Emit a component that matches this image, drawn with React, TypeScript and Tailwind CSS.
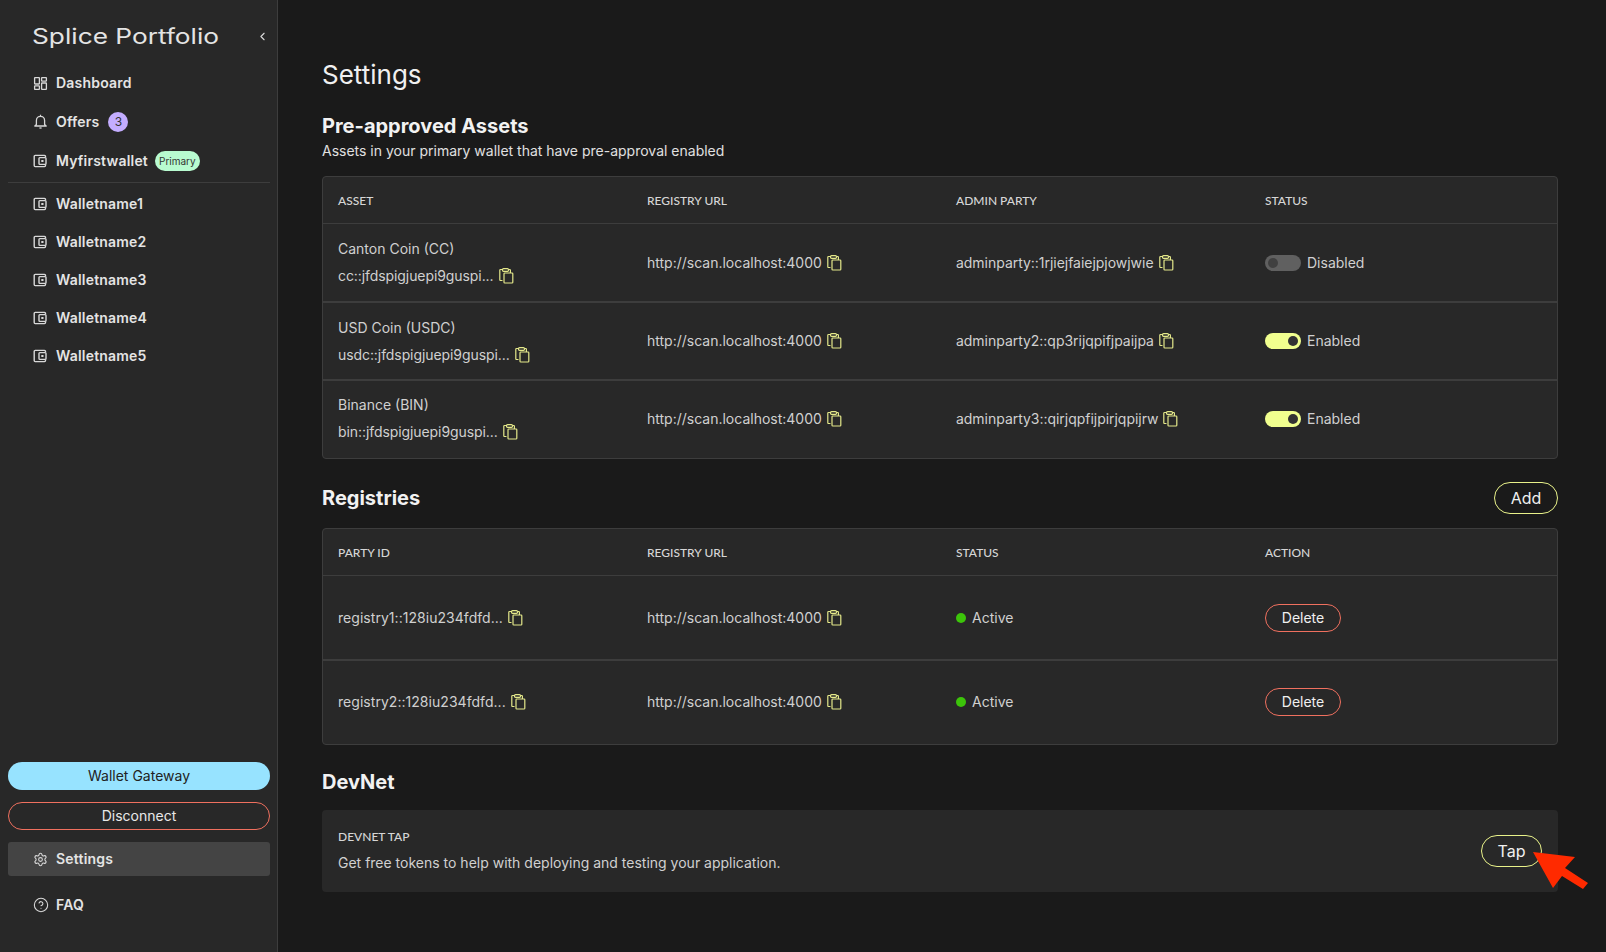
import React from "react";
import { ChevronLeft, CircleHelp, Settings } from "lucide-react";

const sans = "font-['Inter',sans-serif]";

const DashboardIcon = () => (
  <svg width="15" height="15" viewBox="0 0 15 15" fill="none" stroke="currentColor" strokeWidth="1.3">
    <rect x="1.6" y="1.6" width="4.8" height="6.4" rx="0.5" />
    <rect x="8.6" y="1.6" width="4.8" height="3.6" rx="0.5" />
    <rect x="8.6" y="7" width="4.8" height="6.4" rx="0.5" />
    <rect x="1.6" y="9.8" width="4.8" height="3.6" rx="0.5" />
  </svg>
);

const BellIcon = () => (
  <svg width="15" height="15" viewBox="0 0 15 15" fill="none" stroke="currentColor" strokeWidth="1.3" strokeLinejoin="round">
    <path d="M7.5 .8v1.4M3.4 10.6V6.4a4.1 4.1 0 0 1 8.2 0v4.2l1.6 1.4H1.8z" />
    <path d="M6.4 14h2.2" />
  </svg>
);

const WalletIcon = () => (
  <svg width="14" height="14" viewBox="0 0 14 14" fill="none" stroke="currentColor" strokeWidth="1.4">
    <path d="M12.5 3.2V2.4a1 1 0 0 0-1-1H2.2a1 1 0 0 0-1 1v9.2a1 1 0 0 0 1 1h9.3a1 1 0 0 0 1-1v-.8" />
    <rect x="6" y="3.6" width="7" height="6.8" rx="0.8" />
    <rect x="8.3" y="6" width="2.2" height="2" fill="currentColor" stroke="none" />
  </svg>
);

const CopyIcon = () => (
  <svg width="15" height="16" viewBox="0 0 15 16" fill="none" stroke="#e4e88a" strokeWidth="1.2" className="shrink-0">
    <path d="M3.5 12.5H1.5a.7.7 0 0 1-.7-.7V2.2a.7.7 0 0 1 .7-.7h2" />
    <path d="M9.5 1.5h1.2a.7.7 0 0 1 .7.7V5" />
    <rect x="3.5" y="0.7" width="6" height="2.6" rx="1" />
    <rect x="5" y="5" width="8.8" height="10" rx="0.8" />
  </svg>
);

const NavItem = ({ icon, label, children, h = "h-[38px]" }: { icon: React.ReactNode; label: string; children?: React.ReactNode; h?: string }) => (
  <div className={`flex ${h} items-center pl-[25px] text-[#e4e4e4]`}>
    <span className="flex w-[23px] shrink-0 text-[#d8d8d8]">{icon}</span>
    <span className="text-sm font-semibold tracking-[0.2px]">{label}</span>
    {children}
  </div>
);

const TableCard = ({ columns, children }: { columns: string[]; children: React.ReactNode }) => (
  <div className="rounded border border-[#3d3d3d] bg-[#282828]">
    <div className="grid h-[47px] grid-cols-[309px_309px_309px_1fr] items-center border-b border-[#3d3d3d] pt-[2px]">
      {columns.map((c) => (
        <div key={c} className="px-[15px] font-['Lato',sans-serif] text-xs font-medium text-[#d6d6d6]">
          {c}
        </div>
      ))}
    </div>
    {children}
  </div>
);

const Copyable = ({ text, tracking = "" }: { text: string; tracking?: string }) => (
  <div className="flex items-center gap-[5px] text-sm text-[#d0d0d0]">
    <span className={tracking}>{text}</span>
    <CopyIcon />
  </div>
);

const Toggle = ({ on }: { on: boolean }) => (
  <div className="flex items-center gap-[6px] text-sm text-[#d0d0d0]">
    <div className={`flex h-4 w-9 items-center rounded-full px-[3px] ${on ? "justify-end bg-[#f1ff8f]" : "justify-start bg-[#606060]"}`}>
      <div className={`h-[10px] w-[10px] rounded-full ${on ? "bg-[#333333]" : "bg-[#404040]"}`} />
    </div>
    <span>{on ? "Enabled" : "Disabled"}</span>
  </div>
);

const assets = [
  { name: "Canton Coin (CC)", id: "cc::jfdspigjuepi9guspi...", admin: "adminparty::1rjiejfaiejpjowjwie", on: false, h: "h-[79px] border-b-2 border-[#3d3d3d]" },
  { name: "USD Coin (USDC)", id: "usdc::jfdspigjuepi9guspi...", admin: "adminparty2::qp3rijqpifjpaijpa", on: true, h: "h-[78px] border-b-2 border-[#3d3d3d]" },
  { name: "Binance (BIN)", id: "bin::jfdspigjuepi9guspi...", admin: "adminparty3::qirjqpfijpirjqpijrw", on: true, h: "h-[77px] pb-[2px]" },
];

const registries = [
  { id: "registry1::128iu234fdfd...", h: "h-[85px] border-b-2 border-[#3d3d3d]" },
  { id: "registry2::128iu234fdfd...", h: "h-[83px] pb-[2px]" },
];

export default function App() {
  return (
    <div className={`relative flex h-[952px] w-full overflow-hidden bg-[#1a1a1a] text-white ${sans}`}>
      <aside className="flex h-full w-[278px] shrink-0 flex-col border-r border-[#3d3d3d] bg-[#282828] pr-[7px] pl-2">
        <div className="flex h-[64px] shrink-0 items-center justify-between pt-[8px] pr-[1px] pl-[24px]">
          <span className="origin-left scale-x-[1.25] text-[21px] leading-none text-[#e4e4e4]">Splice Portfolio</span>
          <ChevronLeft size={13} className="text-[#d8d8d8]" />
        </div>
        <NavItem icon={<DashboardIcon />} label="Dashboard" />
        <NavItem icon={<BellIcon />} label="Offers" h="h-[39px]">
          <span className="ml-[9px] flex h-5 w-5 items-center justify-center rounded-full bg-[#c4adff] text-xs text-[#333333]">3</span>
        </NavItem>
        <NavItem icon={<WalletIcon />} label="Myfirstwallet" h="h-[40px]">
          <span className="ml-[7px] flex h-5 items-center rounded-full bg-[#b8fbd0] px-[4px] text-[10px] text-[#333333]">Primary</span>
        </NavItem>
        <div className="mt-[1px] mb-[2px] h-px bg-[#3d3d3d]" />
        {["Walletname1", "Walletname2", "Walletname3", "Walletname4", "Walletname5"].map((w) => (
          <NavItem key={w} icon={<WalletIcon />} label={w} />
        ))}
        <div className="flex-1" />
        <button className="h-7 rounded-full bg-[#97e3ff] text-sm text-[#222222]">Wallet Gateway</button>
        <button className="mt-3 h-7 rounded-full border border-[#f0705f] text-sm text-[#e8e8e8]">Disconnect</button>
        <div className="mt-3 rounded-[3px] bg-[#444444]">
          <NavItem icon={<Settings size={15} strokeWidth={1.7} />} label="Settings" h="h-[34px]" />
        </div>
        <div className="mt-[10px] mb-[28px]">
          <NavItem icon={<CircleHelp size={16} strokeWidth={1.6} />} label="FAQ" h="h-[38px]" />
        </div>
      </aside>

      <main className="min-w-0 flex-1 pt-[59px] pr-[48px] pl-[44px]">
        <h1 className="text-[26px] leading-8 font-normal text-[#f0f0f0]">Settings</h1>
        <h2 className="mt-[21px] text-xl leading-7 font-bold text-[#f2f2f2]">Pre-approved Assets</h2>
        <p className="mt-[2px] mb-[16px] text-sm leading-[18px] text-[#e0e0e0]">Assets in your primary wallet that have pre-approval enabled</p>

        <TableCard columns={["ASSET", "REGISTRY URL", "ADMIN PARTY", "STATUS"]}>
          {assets.map((a) => (
            <div key={a.name} className={`grid grid-cols-[309px_309px_309px_1fr] items-center ${a.h}`}>
              <div className="px-[15px]">
                <div className="text-sm leading-5 text-[#d0d0d0]">{a.name}</div>
                <div className="mt-[7px]">
                  <Copyable text={a.id} tracking="tracking-[-0.08px]" />
                </div>
              </div>
              <div className="px-[15px]">
                <Copyable text="http://scan.localhost:4000" />
              </div>
              <div className="px-[15px]">
                <Copyable text={a.admin} tracking="tracking-[-0.03px]" />
              </div>
              <div className="px-[15px]">
                <Toggle on={a.on} />
              </div>
            </div>
          ))}
        </TableCard>

        <div className="mt-[23px] mb-[14px] flex h-8 items-center justify-between">
          <h2 className="text-xl font-bold text-[#f2f2f2]">Registries</h2>
          <button className="h-8 w-[64px] rounded-full border border-[#e9f28a] text-base text-[#f0f0f0]">Add</button>
        </div>

        <TableCard columns={["PARTY ID", "REGISTRY URL", "STATUS", "ACTION"]}>
          {registries.map((r) => (
            <div key={r.id} className={`grid grid-cols-[309px_309px_309px_1fr] items-center ${r.h}`}>
              <div className="px-[15px]">
                <Copyable text={r.id} tracking="tracking-[0.04px]" />
              </div>
              <div className="px-[15px]">
                <Copyable text="http://scan.localhost:4000" />
              </div>
              <div className="flex items-center gap-[6px] px-[15px] text-sm text-[#d0d0d0]">
                <span className="h-[10px] w-[10px] rounded-full bg-[#3cc40a]" />
                Active
              </div>
              <div className="px-[15px]">
                <button className="h-7 w-[76px] rounded-full border border-[#f0705f] text-sm text-[#f0f0f0]">Delete</button>
              </div>
            </div>
          ))}
        </TableCard>

        <h2 className="mt-[23px] text-xl leading-7 font-bold text-[#f2f2f2]">DevNet</h2>
        <div className="mt-[14px] flex h-[82px] items-center justify-between rounded bg-[#282828] pr-[16px] pl-[16px]">
          <div>
            <div className="font-['Lato',sans-serif] text-xs font-medium text-[#d6d6d6]">DEVNET TAP</div>
            <div className="mt-[8px] text-sm text-[#d0d0d0]">Get free tokens to help with deploying and testing your application.</div>
          </div>
          <button className="h-8 w-[61px] rounded-full border border-[#e9f28a] text-base text-[#f0f0f0]">Tap</button>
        </div>
      </main>

      {/* red annotation arrow on top of the screenshot */}
      <svg className="absolute top-[848px] left-[1530px]" width="62" height="46" viewBox="0 0 62 46" fill="#ff2a00">
        <path d="M3 4 L45 9 L35 20 L58 35 L53 41 L32 28 L23 40 Z" />
      </svg>
    </div>
  );
}
